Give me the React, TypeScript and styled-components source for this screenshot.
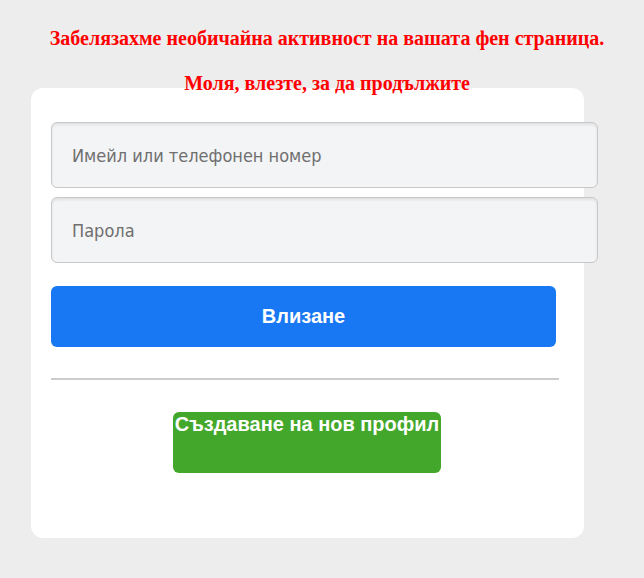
import styled, { createGlobalStyle } from 'styled-components';

const GlobalStyle = createGlobalStyle`
  html, body {
    margin: 0;
    padding: 0;
    background-color: #ededed;
  }
  body {
    font-family: "Liberation Serif", "Times New Roman", serif;
  }
`;

function App() {
  return (
    <Page>
      <GlobalStyle />
      <Warning>Забелязахме необичайна активност на вашата фен страница.</Warning>
      <Warning last>Моля, влезте, за да продължите</Warning>
      <Card>
        <Field type="text" placeholder="Имейл или телефонен номер" />
        <Field type="password" placeholder="Парола" />
        <LoginButton type="button">Влизане</LoginButton>
        <Divider />
        <CreateRow>
          <CreateButton href="#">Създаване на нов профил</CreateButton>
        </CreateRow>
      </Card>
    </Page>
  );
}

const Page = styled.div`
  padding-top: 27px;
  padding-bottom: 40px;
`;

const Warning = styled.h3<{ last?: boolean }>`
  margin: 0 0 ${(p) => (p.last ? '-7px' : '22px')} 10px;
  text-align: center;
  color: #ff0000;
  font-family: "Liberation Serif", "Times New Roman", serif;
  font-weight: bold;
  font-size: 20px;
  line-height: 23px;
`;

const Card = styled.div`
  display: flex;
  flex-direction: column;
  width: 553px;
  height: 450px;
  margin-left: 31px;
  box-sizing: border-box;
  padding: 34px 20px 0;
  background-color: #ffffff;
  border-radius: 12px;
`;

const Field = styled.input`
  width: 547px;
  height: 66px;
  box-sizing: border-box;
  margin-bottom: 9px;
  padding: 0 20px;
  background-color: #f3f4f6;
  border: 1px solid #c8c8c8;
  border-radius: 6px;
  box-shadow: inset 0 2px 3px rgba(0, 0, 0, 0.08);
  font-family: "DejaVu Sans Condensed", "DejaVu Sans", sans-serif;
  font-size: 18px;
  color: #1c1e21;
  outline: none;

  &::placeholder {
    color: #6f6f6f;
  }
`;

const LoginButton = styled.button`
  width: 505px;
  height: 61px;
  margin-top: 14px;
  border: none;
  border-radius: 6px;
  background-color: #1877f2;
  color: #ffffff;
  font-family: "Liberation Sans", Arial, sans-serif;
  font-weight: bold;
  font-size: 20px;
  cursor: pointer;
`;

const Divider = styled.hr`
  width: 508px;
  margin: 31px 0 0;
  border: none;
  border-top: 2px solid #cccccc;
`;

const CreateRow = styled.div`
  display: flex;
  justify-content: center;
  width: 512px;
  margin-top: 32px;
`;

const CreateButton = styled.a`
  display: block;
  height: 61px;
  box-sizing: border-box;
  padding: 0 2px;
  background-color: #42a72a;
  border-radius: 6px;
  color: #ffffff;
  text-decoration: none;
  font-family: "Liberation Sans", Arial, sans-serif;
  font-weight: bold;
  font-size: 20px;
  line-height: 24px;
`;

export default App;
